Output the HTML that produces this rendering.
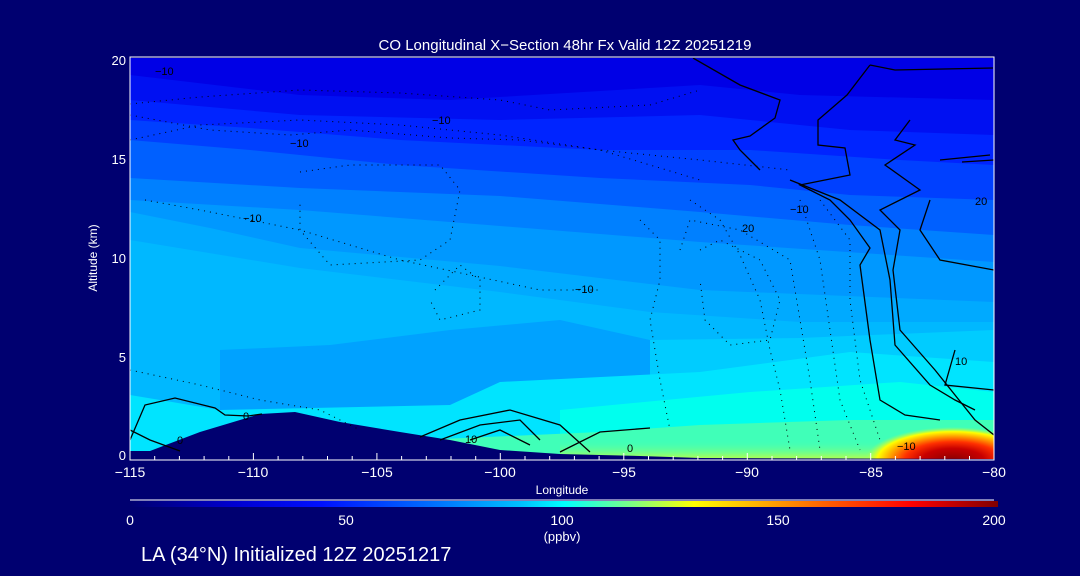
<!DOCTYPE html>
<html><head><meta charset="utf-8"><style>
html,body{margin:0;padding:0;background:#000070;}
body{width:1080px;height:576px;overflow:hidden;position:relative;font-family:"Liberation Sans",sans-serif;color:#fff;}
svg{position:absolute;left:0;top:0}
</style></head><body>
<svg width="1080" height="576" viewBox="0 0 1080 576" xmlns="http://www.w3.org/2000/svg">
<defs>
<linearGradient id="cb" x1="0" x2="1" y1="0" y2="0">
<stop offset="0" stop-color="#000070"/>
<stop offset="0.12" stop-color="#0000d0"/>
<stop offset="0.22" stop-color="#0010ff"/>
<stop offset="0.35" stop-color="#0070ff"/>
<stop offset="0.45" stop-color="#00c0ff"/>
<stop offset="0.5" stop-color="#00ffff"/>
<stop offset="0.58" stop-color="#80ff80"/>
<stop offset="0.65" stop-color="#ffff00"/>
<stop offset="0.8" stop-color="#ff6000"/>
<stop offset="0.9" stop-color="#ff0000"/>
<stop offset="1" stop-color="#800000"/>
</linearGradient>
<radialGradient id="hot" cx="0.55" cy="0.7" r="0.55">
<stop offset="0" stop-color="#8a0000"/>
<stop offset="0.35" stop-color="#c80000"/>
<stop offset="0.55" stop-color="#ff3000"/>
<stop offset="0.72" stop-color="#ffa000"/>
<stop offset="0.86" stop-color="#ffff00"/>
<stop offset="1" stop-color="#a0ff60" stop-opacity="0"/>
</radialGradient>
<linearGradient id="gs" x1="0" x2="0" y1="0" y2="1">
<stop offset="0" stop-color="#40ffb8" stop-opacity="0"/>
<stop offset="1" stop-color="#c0ff40"/>
</linearGradient>
<clipPath id="pa"><rect x="130" y="58" width="864" height="402"/></clipPath>
</defs>
<g clip-path="url(#pa)">
<rect x="130" y="58" width="864" height="402" fill="#0000e6"/>
<path d="M130,75 L300,95 450,100 700,85 800,95 994,100 V460 H130Z" fill="#0010f2"/>
<path d="M130,100 L300,115 500,120 700,115 850,130 994,135 V460 H130Z" fill="#0024ff"/>
<path d="M130,120 L250,128 400,140 600,150 750,150 900,160 994,165 V460 H130Z" fill="#0040ff"/>
<path d="M130,140 L250,150 400,165 600,178 750,185 850,195 994,200 V460 H130Z" fill="#0060ff"/>
<path d="M130,178 L300,188 500,196 700,212 850,225 994,235 V460 H130Z" fill="#0080ff"/>
<path d="M130,200 L300,210 500,226 700,242 994,262 V460 H130Z" fill="#0098ff"/>
<path d="M130,212 L210,228 300,248 500,266 700,290 994,302 V460 H130Z" fill="#00aaff"/>
<path d="M130,240 L300,268 500,292 650,312 800,322 994,322 V460 H130Z" fill="#00b8ff"/>
<path d="M220,350 L330,345 450,330 560,320 650,340 700,380 650,410 450,412 300,418 220,410Z" fill="#00a2ff"/>
<path d="M650,340 L800,338 994,330 V460 H650Z" fill="#00ccff"/>
<path d="M130,395 L220,410 450,405 500,382 700,372 850,352 994,362 V460 H130Z" fill="#00e4ff"/>
<path d="M560,410 L750,392 900,382 994,392 V460 H560Z" fill="#00ffee"/>
<path d="M420,440 L600,432 700,425 850,420 994,420 V460 H420Z" fill="#40ffb8"/>
<rect x="560" y="440" width="434" height="20" fill="url(#gs)"/>
<ellipse cx="945" cy="448" rx="80" ry="30" fill="url(#hot)"/>
<path d="M130,451 L150,451 200,432 260,414 295,412 340,422 400,432 450,440 500,450 560,454 640,456 700,458 994,459 V462 H130Z" fill="#000070"/>
<g fill="none" stroke="#000" stroke-width="1.3">
<path d="M130,440 L145,405 175,398 215,408 225,415 248,416 262,414"/>
<path d="M130,430 L150,440 180,451"/>
<path d="M420,437 L460,420 510,410 560,425 590,452"/>
<path d="M440,440 L480,425 520,420 540,440"/>
<path d="M470,440 L500,430 530,445"/>
<path d="M560,452 L600,432 650,428"/>
<path d="M693,58 L740,85 780,100 775,118 750,136 733,140 740,150 760,170"/>
<path d="M870,65 L895,70 993,68"/>
<path d="M870,65 L847,95 818,120 818,145 845,148 850,175 800,185 830,200 850,220 870,248 860,265 870,340 880,400 905,415 940,420"/>
<path d="M910,120 L895,140 915,145 885,165 920,190 880,210 900,230 893,270 900,330 935,370 975,420 994,435"/>
<path d="M940,160 L990,155 M962,162 L994,160"/>
<path d="M930,200 L920,230 940,260 994,270"/>
<path d="M790,180 L840,200 880,230 890,280 895,345 930,385 955,400 975,410"/>
<path d="M955,350 L945,385 994,390"/>
</g>
<g fill="none" stroke="#000" stroke-width="1" stroke-dasharray="1 5">
<path d="M130,104 L200,97 300,90 400,93 500,100 550,110 650,105 700,90"/>
<path d="M130,115 L210,130 290,135 350,130 450,138 520,140 600,150 700,160 790,170"/>
<path d="M130,140 L200,125 300,120 400,125 500,135 600,150 700,180"/>
<path d="M145,200 L200,210 300,230 400,260 470,275 540,290 600,290"/>
<path d="M300,172 L350,165 440,165 460,190 450,240 420,260 330,265 300,230 300,200"/>
<path d="M435,290 L460,265 480,280 480,310 440,320 430,300"/>
<path d="M690,200 L720,220 740,255 760,300 770,350 780,390 790,450"/>
<path d="M680,250 L690,220 740,230 790,260 800,320 810,380 820,450"/>
<path d="M700,250 L720,240 760,260 780,300 770,340 730,345 705,320 700,280"/>
<path d="M640,220 L660,240 660,280 650,320 660,380 670,430"/>
<path d="M800,200 L820,260 830,330 840,400 860,450"/>
<path d="M820,200 L850,240 850,300 860,380 880,440"/>
<path d="M130,370 L200,385 260,400 320,410 360,430"/>
</g>
</g>
<g font-family="Liberation Sans,sans-serif" font-size="11" fill="#000">
<text x="155" y="75">−10</text><text x="290" y="147">−10</text><text x="432" y="124">−10</text>
<text x="790" y="213">−10</text><text x="575" y="293">−10</text><text x="243" y="222">−10</text>
<text x="897" y="450">−10</text><text x="243" y="420">0</text><text x="177" y="444">0</text>
<text x="465" y="443">10</text><text x="627" y="452">0</text><text x="955" y="365">10</text>
<text x="975" y="205">20</text><text x="742" y="232">20</text>
</g>
<rect x="130" y="57" width="864" height="403" fill="none" stroke="#fff" stroke-width="1"/>
<g stroke="#fff" stroke-width="1">
<path d="M130,460 v-6 M154.7,460 v-4 M179.4,460 v-4 M204.1,460 v-4 M228.8,460 v-4 M253.4,460 v-7 M278.1,460 v-4 M302.8,460 v-4 M327.5,460 v-4 M352.2,460 v-4 M376.9,460 v-7 M401.6,460 v-4 M426.3,460 v-4 M451,460 v-4 M475.7,460 v-4 M500.3,460 v-7 M525,460 v-4 M549.7,460 v-4 M574.4,460 v-4 M599.1,460 v-4 M623.8,460 v-7 M648.5,460 v-4 M673.2,460 v-4 M697.9,460 v-4 M722.6,460 v-4 M747.3,460 v-7 M772,460 v-4 M796.6,460 v-4 M821.3,460 v-4 M846,460 v-4 M870.7,460 v-7 M895.4,460 v-4 M920.1,460 v-4 M944.8,460 v-4 M969.5,460 v-4"/>
<path d="M130,500 H994"/>
</g>
<rect x="130" y="501" width="868" height="6" fill="url(#cb)"/>
<g fill="#fff" font-family="Liberation Sans,sans-serif" font-size="13">
<text x="565" y="50" text-anchor="middle" font-size="15">CO Longitudinal X−Section 48hr  Fx Valid 12Z 20251219</text>
<text x="126" y="65" text-anchor="end">20</text>
<text x="126" y="164" text-anchor="end">15</text>
<text x="126" y="263" text-anchor="end">10</text>
<text x="126" y="362" text-anchor="end">5</text>
<text x="126" y="460" text-anchor="end">0</text>
<text transform="translate(97,258) rotate(-90)" text-anchor="middle" font-size="12">Altitude (km)</text>
<text x="130" y="477" text-anchor="middle" font-size="14">−115</text>
<text x="253" y="477" text-anchor="middle" font-size="14">−110</text>
<text x="377" y="477" text-anchor="middle" font-size="14">−105</text>
<text x="500" y="477" text-anchor="middle" font-size="14">−100</text>
<text x="624" y="477" text-anchor="middle" font-size="14">−95</text>
<text x="747" y="477" text-anchor="middle" font-size="14">−90</text>
<text x="871" y="477" text-anchor="middle" font-size="14">−85</text>
<text x="994" y="477" text-anchor="middle" font-size="14">−80</text>
<text x="562" y="494" text-anchor="middle" font-size="12">Longitude</text>
<text x="130" y="525" text-anchor="middle" font-size="14">0</text>
<text x="346" y="525" text-anchor="middle" font-size="14">50</text>
<text x="562" y="525" text-anchor="middle" font-size="14">100</text>
<text x="778" y="525" text-anchor="middle" font-size="14">150</text>
<text x="994" y="525" text-anchor="middle" font-size="14">200</text>
<text x="562" y="541" text-anchor="middle">(ppbv)</text>
<text x="141" y="561" font-size="20">LA (34°N) Initialized 12Z 20251217</text>
</g>
</svg>
</body></html>
